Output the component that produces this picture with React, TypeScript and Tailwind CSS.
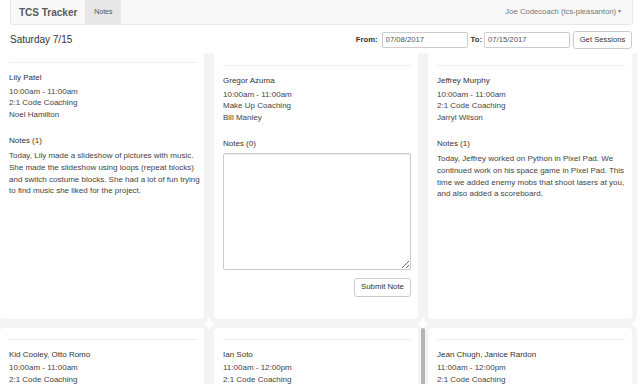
import React from 'react'

type Session = {
  id: string
  students: string
  time: string
  kind: string
  coach: string
  notes: string[]
}

const firstRow: Session[] = [
  {
    id: 's1',
    students: 'Lily Patel',
    time: '10:00am - 11:00am',
    kind: '2:1 Code Coaching',
    coach: 'Noel Hamilton',
    notes: [
      'Today, Lily made a slideshow of pictures with music. She made the slideshow using loops (repeat blocks) and switch costume blocks. She had a lot of fun trying to find music she liked for the project.',
    ],
  },
  {
    id: 's2',
    students: 'Gregor Azuma',
    time: '10:00am - 11:00am',
    kind: 'Make Up Coaching',
    coach: 'Bill Manley',
    notes: [],
  },
  {
    id: 's3',
    students: 'Jeffrey Murphy',
    time: '10:00am - 11:00am',
    kind: '2:1 Code Coaching',
    coach: 'Jarryl Wilson',
    notes: [
      'Today, Jeffrey worked on Python in Pixel Pad. We continued work on his space game in Pixel Pad. This time we added enemy mobs that shoot lasers at you, and also added a scoreboard.',
    ],
  },
]

const secondRow: Session[] = [
  {
    id: 's4',
    students: 'Kid Cooley, Otto Romo',
    time: '10:00am - 11:00am',
    kind: '2:1 Code Coaching',
    coach: 'Noel Hamilton',
    notes: [],
  },
  {
    id: 's5',
    students: 'Ian Soto',
    time: '11:00am - 12:00pm',
    kind: '2:1 Code Coaching',
    coach: 'Bill Manley',
    notes: [],
  },
  {
    id: 's6',
    students: 'Jean Chugh, Janice Rardon',
    time: '11:00am - 12:00pm',
    kind: '2:1 Code Coaching',
    coach: 'Jarryl Wilson',
    notes: [],
  },
]

function SessionCard({ session, topPad }: { session: Session; topPad: string }) {
  return (
    <div
      className={`rounded-[4px] bg-white pl-[9px] pr-[7px] pb-[22px] text-[8px] shadow-[0_0_0_5px_#f4f4f4] ${topPad}`}
    >
      <div className="border-t border-[#eeeeee]" />
      <div className="mt-[9px] leading-[11.5px] text-[#333]">{session.students}</div>
      <div className="mt-[2px] leading-[11.7px] text-[#444]">
        <div>{session.time}</div>
        <div>{session.kind}</div>
        <div>{session.coach}</div>
      </div>
      <div className="mt-[14.5px] leading-[11.5px] text-[#333]">Notes ({session.notes.length})</div>
      {session.notes.length > 0 ? (
        session.notes.map((n, i) => (
          <p key={i} className="-mr-[4px] mt-[3.5px] leading-[11.7px] text-[#444]">
            {n}
          </p>
        ))
      ) : (
        <div className="mt-[3px] flex flex-col">
          <textarea className="h-[117px] w-full rounded-[2px] border border-[#cccccc] shadow-[inset_0_1px_1px_rgba(0,0,0,0.075)]" />
          <div className="mt-[8px] flex justify-end">
            <button
              type="button"
              className="h-[19px] w-[57px] rounded-[3px] border border-[#cccccc] bg-white text-[7.8px] text-[#333]"
            >
              Submit Note
            </button>
          </div>
        </div>
      )}
    </div>
  )
}

export default function App() {
  return (
    <div className="h-[384px] w-[640px] overflow-hidden bg-white font-['Liberation_Sans',Arial,sans-serif] text-[7.7px] text-[#333]">
      {/* navbar */}
      <div className="ml-[10px] mr-[7px] flex h-[25px] items-stretch rounded-b-[3px] border border-t-0 border-[#e7e7e7] bg-[#f8f8f8]">
        <div className="flex items-center pl-[8px] pr-[8px] text-[10px] font-bold text-[#5a5a5a]">TCS Tracker</div>
        <div className="flex w-[36px] items-center justify-center bg-[#e7e7e7] text-[7px] text-[#555]">Notes</div>
        <div className="ml-auto flex items-center pr-[10px] text-[7.7px] text-[#777]">
          Joe Codecoach (tcs-pleasanton)
          <span className="ml-[1px] text-[5px]">▼</span>
        </div>
      </div>

      {/* date row */}
      <div className="flex h-[28px] items-center pl-[10px] pr-[8px] pt-[1px]">
        <div className="text-[10px] text-[#333]">Saturday 7/15</div>
        <div className="ml-auto flex items-center">
          <span className="font-bold">From:</span>
          <input
            readOnly
            value="07/08/2017"
            className="ml-[4px] h-[16px] w-[86px] rounded-[2px] border border-[#cccccc] px-[3px] text-[7.7px] text-[#555]"
          />
          <span className="ml-[3px] font-bold">To:</span>
          <input
            readOnly
            value="07/15/2017"
            className="ml-[2px] h-[16px] w-[86px] rounded-[2px] border border-[#cccccc] px-[3px] text-[7.7px] text-[#555]"
          />
          <button
            type="button"
            className="ml-[3px] h-[18px] w-[59px] rounded-[3px] border border-[#cccccc] bg-white text-[7.7px] text-[#333]"
          >
            Get Sessions
          </button>
        </div>
      </div>

      {/* session cards */}
      <div className="relative h-[331px] overflow-hidden">
        <div className="-mt-[5px] grid grid-cols-3 gap-x-[10px] gap-y-[9px] pr-[8px]">
          {firstRow.map((s, i) => (
            <SessionCard key={s.id} session={s} topPad={i === 0 ? 'pt-[14px]' : 'pt-[17px]'} />
          ))}
          {secondRow.map((s) => (
            <SessionCard key={s.id} session={s} topPad="pt-[11px]" />
          ))}
        </div>
        <div className="absolute left-[421px] top-[275px] h-[70px] w-[4px] rounded-full bg-[#b5b5b5]" />
      </div>
    </div>
  )
}
